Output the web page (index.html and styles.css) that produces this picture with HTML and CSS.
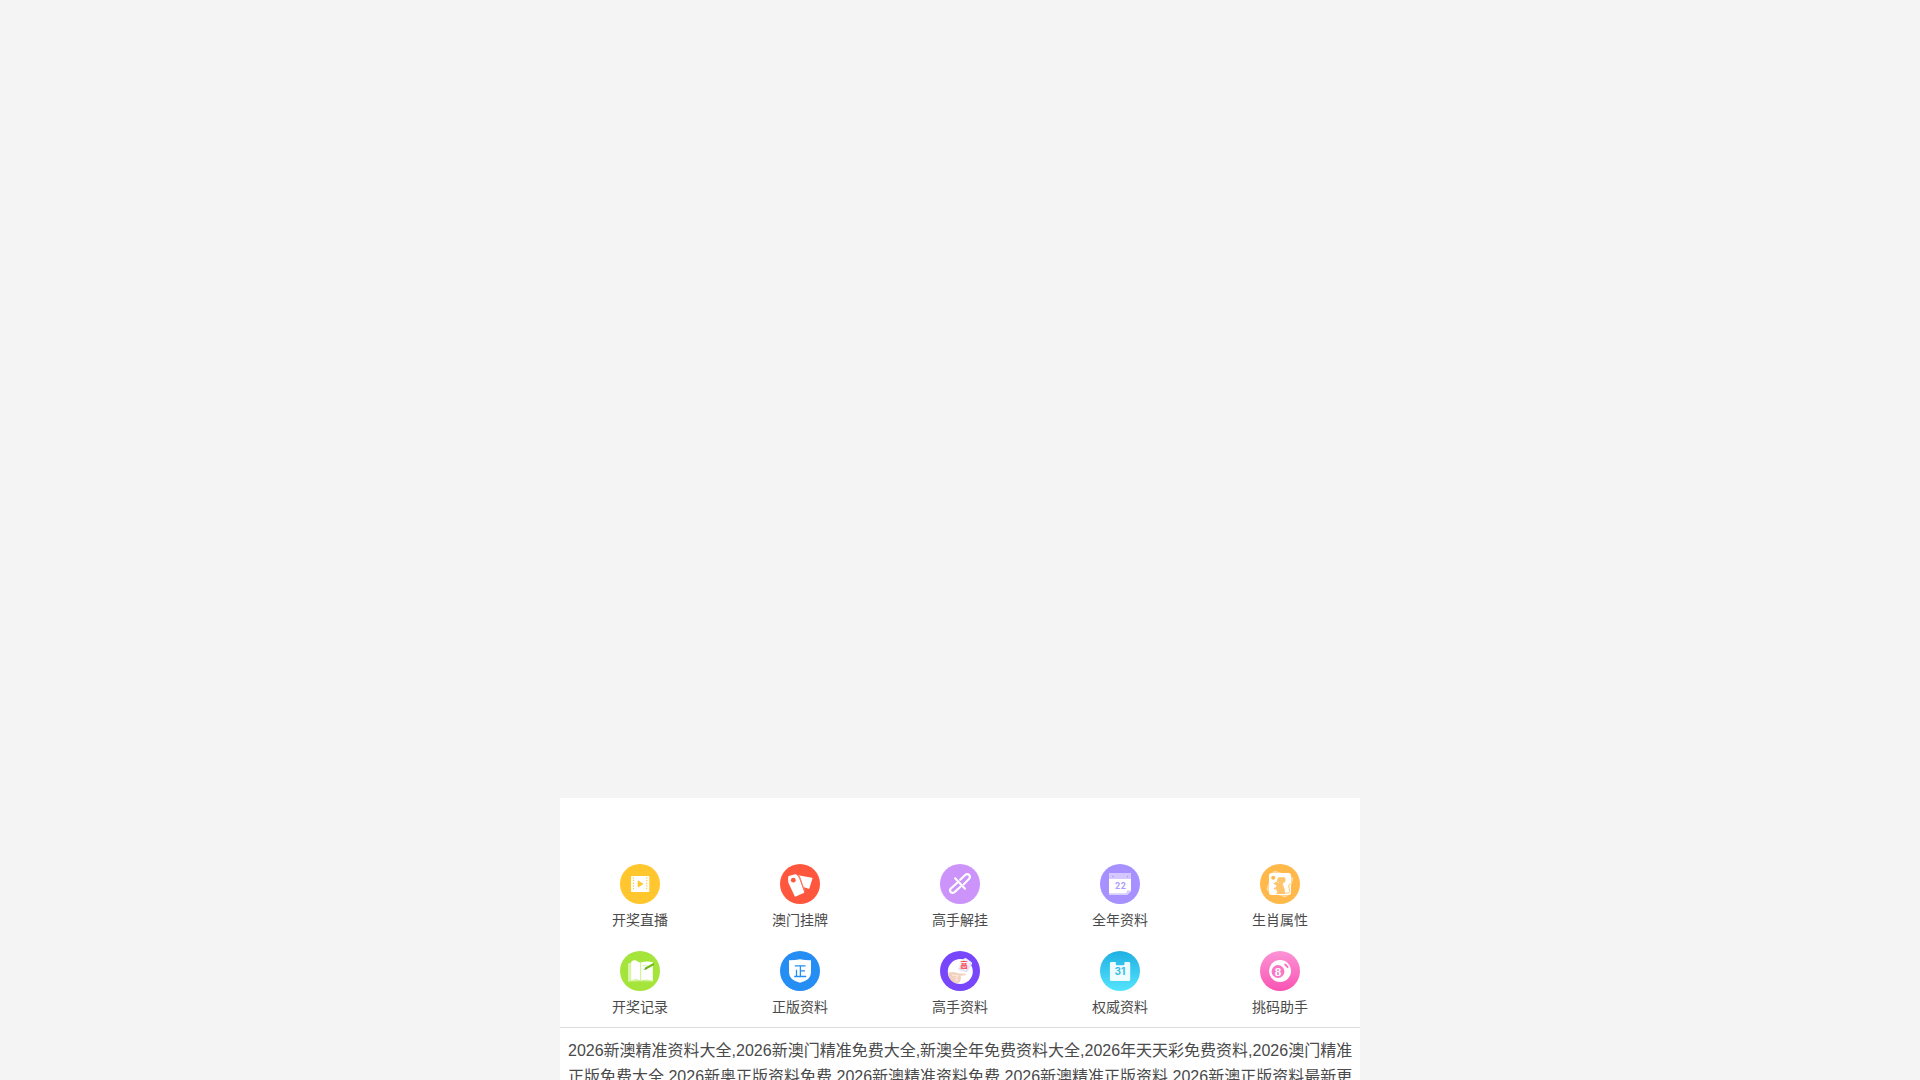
FILE: index.html
```html
<!DOCTYPE html>
<html lang="zh-CN">
<head>
  <meta charset="UTF-8">
  <meta name="viewport" content="width=device-width, initial-scale=1.0">
  <title>资料大全</title>
  <link rel="stylesheet" href="styles.css">
</head>
<body>
  <div class="banner"></div>
  <div class="container">
    <nav class="nav-list">
      <a class="nav-item">
        <svg class="icon" viewBox="0 0 40 40">
          <circle cx="20" cy="20" r="20" fill="#ffc62e"/>
          <rect x="11" y="12" width="18.3" height="16" rx="0.8" fill="#fff"/>
          <path d="M13.5 13.5v13M26.7 13.5v13" stroke="#ffc62e" stroke-width="1.1" stroke-dasharray="1.2 1.4"/>
          <path d="M18 16.8v6.4l5-3.3z" fill="#ffc62e" stroke="#ffc62e" stroke-width="0.6" stroke-linejoin="round"/>
        </svg>
        <span>开奖直播</span>
      </a>
      <a class="nav-item">
        <svg class="icon" viewBox="0 0 40 40">
          <circle cx="20" cy="20" r="20" fill="#ff573d"/>
          <path d="M18.3 11.2l13.6 2.5q.7.2.5 1l-3 9.5q-.3.8-1 .5l-4.9-1.7-3.5-10.2z" fill="#fff"/>
          <path d="M9 12.1l6-1.9q1.3-.2 2.3 1l1.8 2.8 5.1 14q.2.7-.5 1l-8 3.5q-.7.2-1.1-.5L8.3 18.5l-.3-4.8q.1-1.2 1-1.6z" fill="#fff"/>
          <path d="M18.1 11.5l1.9 2.8 4.7 12.5" fill="none" stroke="#ff8b78" stroke-width="0.8"/>
          <circle cx="13.3" cy="16.2" r="2.4" fill="#ff573d"/>
        </svg>
        <span>澳门挂牌</span>
      </a>
      <a class="nav-item">
        <svg class="icon" viewBox="0 0 40 40">
          <circle cx="20" cy="20" r="20" fill="#cc94fb"/>
          <g fill="none" stroke="#fff" stroke-width="2.1" stroke-linecap="round">
            <path d="M20.2 15.8l5.2-5q1.9-1.4 3.7.1 1.7 1.7.1 3.7l-5.4 5.7"/>
            <path d="M17.1 18.9l-6.2 5.5q-1.7 1.9-.2 3.7 1.8 1.6 3.8 0l5.9-5.3"/>
            <path d="M15.1 14.3l9.9 10.5"/>
          </g>
        </svg>
        <span>高手解挂</span>
      </a>
      <a class="nav-item">
        <svg class="icon" viewBox="0 0 40 40">
          <circle cx="20" cy="20" r="20" fill="#a790ff"/>
          <path d="M10 9h20q1 0 1 1v17l-4 4H10q-1 0-1-1V10q0-1 1-1z" fill="#fff"/>
          <path d="M10 9h20q1 0 1 1v5H9v-5q0-1 1-1z" fill="#d4c8ff"/>
          <path d="M9 29.2h17.2l.8-2.8h4L27 31H10q-1 0-1-1z" fill="#d8ceff"/>
          <circle cx="13" cy="12.5" r="0.8" fill="#a790ff"/>
          <circle cx="27.6" cy="12.5" r="0.8" fill="#a790ff"/>
          <text x="20.8" y="25" class="num22">22</text>
        </svg>
        <span>全年资料</span>
      </a>
      <a class="nav-item">
        <svg class="icon" viewBox="0 0 40 40">
          <circle cx="20" cy="20" r="20" fill="#ffb94a"/>
          <rect x="9" y="9" width="22" height="22" rx="3" fill="#ffd797" transform="rotate(20 20 20)"/>
          <rect x="9" y="9" width="22" height="22" rx="2.5" fill="#fff"/>
          <circle cx="13.2" cy="13.7" r="2" fill="#ffb94a"/>
          <path d="M13 19.6l4.1-2.2q-.4-3.2 2.4-4.3 1.3-.4 2.2.3 2-1 3.4.6 1.5 2.3-.3 4.2-.8.7-1.8.8-.5 1.5.5 3.2 1.8 3 1.4 5.7l1 2.1H15.5l1.8-1.3-1.1-3.4-2.1.2-.2-1.2 2.6-1.7-.3-1.3z" fill="#ffc56c"/>
          <path d="M25.5 29h3.2q2-.8.5-4.4-1.2-3.1.2-4.1l1.4-.5" fill="none" stroke="#ffc56c" stroke-width="1"/>
          <circle cx="18.2" cy="18.6" r="0.6" fill="#fff"/>
        </svg>
        <span>生肖属性</span>
      </a>
      <a class="nav-item">
        <svg class="icon" viewBox="0 0 40 40">
          <circle cx="20" cy="20" r="20" fill="#a5e43a"/>
          <path d="M8 12.5l4-1v17.3l8.5.8 12.5-.6v1.4l-12.2-.2L8 30.5z" fill="#d8f5a7"/>
          <path d="M11.2 10.8q3.2-2.6 6.1-.5 2 1.5 3.4 1.3v18q-4.5-2-9.5-.4z" fill="#fff"/>
          <path d="M20.7 11.6q6-2 12.1-.3v18.2q-6.4-1.5-12.1.1z" fill="#fff"/>
          <path d="M20.7 11.6v18" stroke="#cdf28f" stroke-width="1"/>
          <path d="M22.3 14.6h5.5" stroke="#d8f5a7" stroke-width="0.8"/>
          <path d="M26 17.3l7.2-3.9" stroke="#6dbd14" stroke-width="2.2" stroke-linecap="round"/>
          <path d="M23.2 19l3-2.3.6 1.4z" fill="#4d9b0c"/>
        </svg>
        <span>开奖记录</span>
      </a>
      <a class="nav-item">
        <svg class="icon" viewBox="0 0 40 40">
          <circle cx="20" cy="20" r="20" fill="#258ef4"/>
          <path d="M20 8.2q5.3 1.2 11 1.1v12.2q0 7.5-11 10.3-11-2.8-11-10.3V9.3q5.7.1 11-1.1z" fill="#fff"/>
          <path d="M14.8 14.9h10.8M20.4 14.9v10.6M20.4 19.9h4.6M16.5 18.7v6.8M14.2 25.5h12" fill="none" stroke="#258ef4" stroke-width="1.3"/>
        </svg>
        <span>正版资料</span>
      </a>
      <a class="nav-item">
        <svg class="icon" viewBox="0 0 40 40">
          <circle cx="20" cy="20" r="20" fill="#7947fb"/>
          <circle cx="20.3" cy="20.5" r="12.5" fill="#fff"/>
          <path d="M8.2 21.4l5.7-.4 4.8 1.6h5.9q1.8.3 1 1.6l-5.3.5.9 2-1.5 4.5-3.5 1.2q-5.3-1.6-7.5-6.7z" fill="#f2d1be"/>
          <path d="M12 24.2l6 .3-1.8 2.3 1.2 2.6-2.2.7" fill="none" stroke="#fae9df" stroke-width="1.1"/>
          <path d="M24.5 7.2q1-.6 2 .2l4.9 3.5q1 .9.5 2l-3.6 7.7q-.7 1.3-2 .9l-7.6-2.2q-1.3-.4-.8-1.8l2.6-7.2z" fill="#f2effa"/>
          <path d="M18.6 17.5l7.8 3.2 4.8-9" fill="none" stroke="#d7d0ec" stroke-width="0.7"/>
          <text x="24.1" y="17" class="gao">高</text>
        </svg>
        <span>高手资料</span>
      </a>
      <a class="nav-item">
        <svg class="icon" viewBox="0 0 40 40">
          <defs>
            <linearGradient id="blue" x1="0" y1="0" x2="0" y2="1">
              <stop offset="0" stop-color="#1fb0e3"/>
              <stop offset="1" stop-color="#55e4fc"/>
            </linearGradient>
          </defs>
          <circle cx="20" cy="20" r="20" fill="url(#blue)"/>
          <path d="M11.5 11h4.3v2q0 1.3 1.3 1.3h6.1q1.3 0 1.3-1.3v-2h4.3q1.4 0 1.4 1.4v16q0 1.5-1.4 1.5H11.3q-1.4 0-1.4-1.5v-16q0-1.4 1.6-1.4z" fill="#effcff"/>
          <text x="20" y="24.3" class="num31">31</text>
        </svg>
        <span>权威资料</span>
      </a>
      <a class="nav-item">
        <svg class="icon" viewBox="0 0 40 40">
          <defs>
            <linearGradient id="pink" x1="0" y1="0" x2="0" y2="1">
              <stop offset="0" stop-color="#fc94d5"/>
              <stop offset="1" stop-color="#f954b3"/>
            </linearGradient>
          </defs>
          <circle cx="20" cy="20" r="20" fill="url(#pink)"/>
          <circle cx="20" cy="20" r="11" fill="#fff"/>
          <circle cx="18" cy="20.5" r="6.4" fill="#fa75c4"/>
          <path d="M25.2 13.5l2.4 2.5" stroke="#fa75c4" stroke-width="1.9" stroke-linecap="round"/>
          <text x="18" y="24.9" class="num8">8</text>
        </svg>
        <span>挑码助手</span>
      </a>
    </nav>
    <div class="intro">2026新澳精准资料大全,2026新澳门精准免费大全,新澳全年免费资料大全,2026年天天彩免费资料,2026澳门精准正版免费大全,2026新奥正版资料免费,2026新澳精准资料免费,2026新澳精准正版资料,2026新澳正版资料最新更新</div>
  </div>
</body>
</html>
```
FILE: styles.css
```css
* {
  box-sizing: border-box;
}
body {
  margin: 0;
  height: 100vh;
  overflow: hidden;
  background-color: #f4f4f4;
  color: #4a4a4a;
  font-family: "Liberation Sans", "Noto Sans CJK SC", sans-serif;
}
.banner {
  height: 798px;
}
.container {
  width: 800px;
  margin: 0 auto;
  background: #fff;
}
.nav-list {
  display: grid;
  grid-template-columns: repeat(5, 1fr);
  row-gap: 20px;
  padding: 66px 0 9px;
  border-bottom: 1px solid #ddd;
}
.nav-item {
  display: flex;
  flex-direction: column;
  align-items: center;
  gap: 6px;
  font-size: 14px;
  line-height: 21px;
}
.icon {
  display: block;
  width: 40px;
  height: 40px;
}
.icon text {
  text-anchor: middle;
}
.num22 {
  font: bold 9px Roboto, sans-serif;
  letter-spacing: 0.7px;
  fill: #b09bfb;
}
.num31 {
  font: bold 10px Inter, sans-serif;
  fill: #35bce5;
}
.num8 {
  font: bold 13px "Liberation Serif", serif;
  fill: #fff;
}
.gao {
  font: bold 7.5px "Noto Sans CJK SC", sans-serif;
  fill: #f63b46;
}
.intro {
  padding: 10px 6px 10px 8px;
  font-size: 16px;
  line-height: 26px;
  word-break: break-all;
}
```
